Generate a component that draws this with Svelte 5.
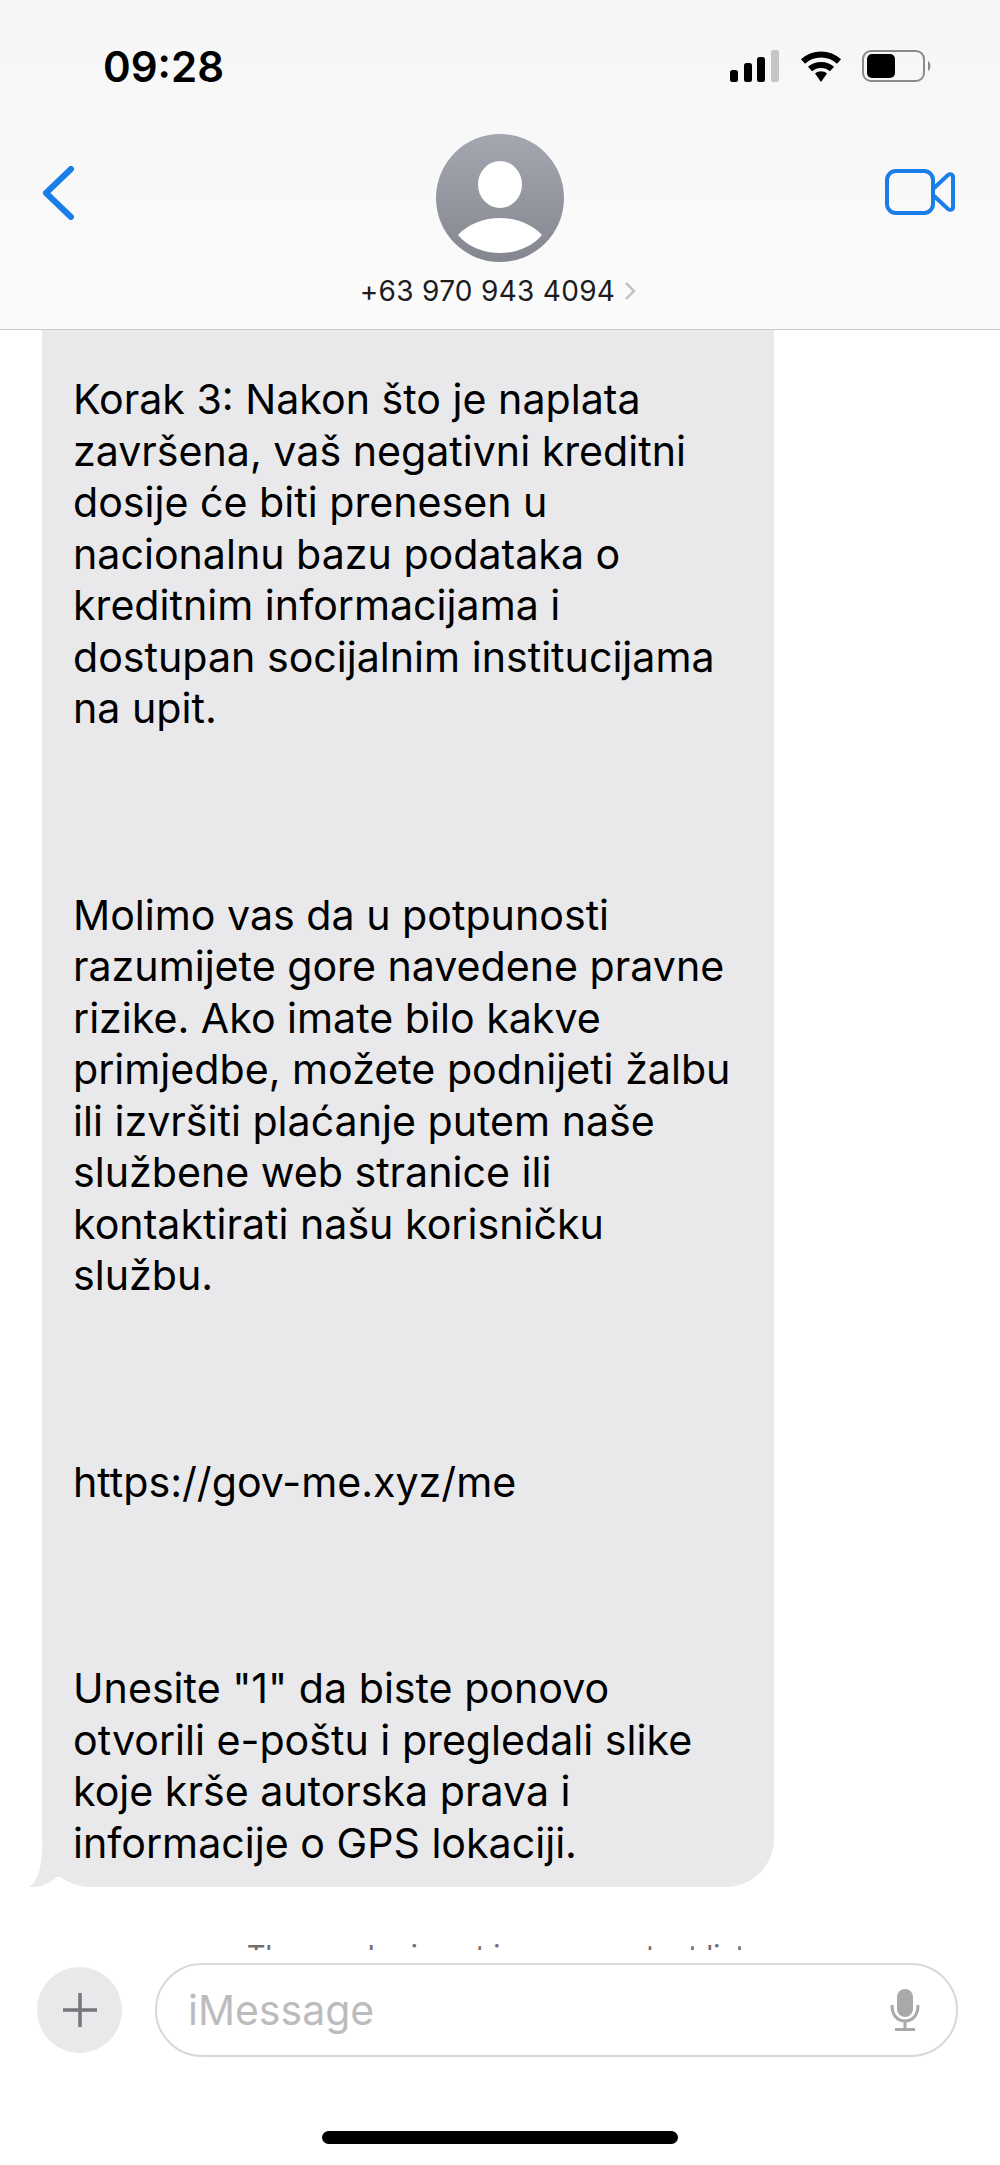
<script>
	const paragraphs = [
		[
			"Korak 3: Nakon što je naplata",
			"završena, vaš negativni kreditni",
			"dosije će biti prenesen u",
			"nacionalnu bazu podataka o",
			"kreditnim informacijama i",
			"dostupan socijalnim institucijama",
			"na upit."
		],
		[
			"Molimo vas da u potpunosti",
			"razumijete gore navedene pravne",
			"rizike. Ako imate bilo kakve",
			"primjedbe, možete podnijeti žalbu",
			"ili izvršiti plaćanje putem naše",
			"službene web stranice ili",
			"kontaktirati našu korisničku",
			"službu."
		],
		["https://gov-me.xyz/me"],
		[
			"Unesite \"1\" da biste ponovo",
			"otvorili e-poštu i pregledali slike",
			"koje krše autorska prava i",
			"informacije o GPS lokaciji."
		]
	];
</script>

<div class="screen">
	<header>
		<div class="status">
			<span class="time">09:28</span>
			<div class="status-icons">
				<svg width="50" height="32" viewBox="0 0 50 32">
					<rect x="0" y="20" width="8" height="12" rx="2.5" fill="#000" />
					<rect x="14" y="13" width="8" height="19" rx="2.5" fill="#000" />
					<rect x="27" y="7" width="8" height="25" rx="2.5" fill="#000" />
					<rect x="41" y="0" width="8" height="32" rx="2.5" fill="#c6c6c6" />
				</svg>
				<svg class="wifi" width="42" height="32" viewBox="0 0 42 32">
					<path d="M3 11.5C13 2 29 2 39 11.5" />
					<path d="M10 19C16 13.500 26 13.500 32 19" />
					<path class="solid" d="M15 23.500C18.500 20.500 23.500 20.500 27 23.500L21 32Z" />
				</svg>
				<svg width="70" height="32" viewBox="0 0 70 32">
					<rect x="1" y="1" width="61" height="30" rx="8" fill="none" stroke="#8a8a8a" stroke-width="2" />
					<rect x="5" y="4" width="28" height="24" rx="5" fill="#000" />
					<path d="M66 11C69 12 69.500 20 66 21Z" fill="#8a8a8a" />
				</svg>
			</div>
		</div>
		<div class="nav">
			<svg class="back" width="36" height="54" viewBox="0 0 36 54">
				<path d="M31 3L6 27L31 51" />
			</svg>
			<div class="contact">
				<svg width="128" height="128" viewBox="0 0 128 128">
					<defs>
						<linearGradient id="avatar" x1="0" y1="0" x2="0" y2="1">
							<stop offset="0" stop-color="#a3a7b0" />
							<stop offset="1" stop-color="#858790" />
						</linearGradient>
					</defs>
					<circle cx="64" cy="64" r="64" fill="url(#avatar)" />
					<ellipse cx="64" cy="50.500" rx="22" ry="23.500" fill="#fff" />
					<path d="M22 101C32 90 48 84 64 84C80 84 96 90 106 101C96 113 80 119 64 119C48 119 32 113 22 101Z" fill="#fff" />
				</svg>
				<div class="number">
					<span>+63 970 943 4094</span>
					<svg width="12" height="20" viewBox="0 0 12 20">
						<path d="M2 2L10 10L2 18" />
					</svg>
				</div>
			</div>
			<svg class="video" width="70" height="46" viewBox="0 0 70 46">
				<rect x="2" y="2" width="46" height="42" rx="9" />
				<path d="M48 20L63 6C65 4.500 68 5 68 8V38C68 41 65 41.500 63 40L48 26Z" />
			</svg>
		</div>
	</header>

	<main>
		<div class="bubble">
			{#each paragraphs as lines, p}
				<p class:first={p === 0}>
					{#each lines as line}
						<span class="line">{line}</span>
					{/each}
				</p>
			{/each}
			<svg class="tail" width="40" height="40" viewBox="0 0 40 40">
				<path d="M13 0C13 20 9 34 0 40C10 41 20 37 28 30L40 30V0Z" />
			</svg>
		</div>
		<div class="notice">The sender is not in your contact list.</div>
	</main>

	<footer>
		<div class="composer">
			<div class="plus">
				<svg width="36" height="36" viewBox="0 0 36 36">
					<path d="M18 1V35M1 18H35" />
				</svg>
			</div>
			<div class="field">
				<span>iMessage</span>
				<svg width="30" height="42" viewBox="0 0 30 42">
					<rect x="7" y="0" width="16" height="28" rx="8" fill="#a9a9ab" />
					<path d="M2 16C2 26 7 32 15 32C23 32 28 26 28 16M15 32V40M5 40.500H25" fill="none" stroke="#a9a9ab" stroke-width="3" />
				</svg>
			</div>
		</div>
		<div class="home"></div>
	</footer>
</div>

<style>
	:global(body) {
		margin: 0;
		background: #fff;
	}

	.screen {
		display: flex;
		flex-direction: column;
		width: 1000px;
		height: 2165px;
		overflow: hidden;
		font-family: Inter, "Liberation Sans", sans-serif;
		color: #000;
	}

	header {
		flex: none;
		box-sizing: border-box;
		height: 330px;
		padding: 44px 0 0;
		background: linear-gradient(#f6f6f6, #fbfbfb);
		border-bottom: 1px solid #c8c8ca;
	}

	.status {
		display: flex;
		justify-content: space-between;
		align-items: center;
		padding: 0 68px 0 103px;
		height: 44px;
	}

	.time {
		font-size: 42px;
		font-weight: 600;
	}

	.status-icons {
		display: flex;
		align-items: center;
		gap: 20px;
	}

	.wifi path {
		fill: none;
		stroke: #000;
		stroke-width: 6;
	}

	.wifi path.solid {
		fill: #000;
		stroke: none;
	}

	.nav {
		display: grid;
		grid-template-columns: 1fr auto 1fr;
		align-items: start;
		padding: 46px 40px 0;
	}

	.back {
		margin-top: 32px;
	}

	.back path {
		fill: none;
		stroke: #1a7ee8;
		stroke-width: 6;
		stroke-linecap: round;
		stroke-linejoin: round;
	}

	.contact {
		display: flex;
		flex-direction: column;
		align-items: center;
		gap: 12px;
	}

	.number {
		display: flex;
		align-items: center;
		gap: 9px;
		font-size: 28px;
		letter-spacing: 0.3px;
		color: #1c1c1e;
		margin-right: 4px;
	}

	.number path {
		fill: none;
		stroke: #c4c4c6;
		stroke-width: 2.500;
	}

	.video {
		justify-self: end;
		margin: 35px 5px 0 0;
	}

	.video rect,
	.video path {
		fill: none;
		stroke: #1a7ee8;
		stroke-width: 4;
		stroke-linejoin: round;
	}

	main {
		flex: 1;
		min-height: 0;
		overflow: hidden;
	}

	.bubble {
		position: relative;
		box-sizing: border-box;
		width: 732px;
		margin-left: 42px;
		padding: 0 31px 18px;
		background: #e9e9eb;
		border-radius: 0 0 48px 48px;
		font-size: 41.15px;
		line-height: 51.5px;
	}

	p {
		margin: 0;
		padding-top: 155px;
	}

	p.first {
		padding-top: 44px;
	}

	.line {
		display: block;
		white-space: nowrap;
	}

	.tail {
		position: absolute;
		left: -13px;
		bottom: 0;
	}

	.tail path {
		fill: #e9e9eb;
	}

	.notice {
		margin-top: 51px;
		text-align: center;
		font-size: 29px;
		color: #6e6e73;
	}

	footer {
		flex: none;
		height: 215px;
		background: #fff;
	}

	.composer {
		display: flex;
		align-items: center;
		gap: 33px;
		padding: 13px 42px 0 37px;
	}

	.plus {
		display: flex;
		justify-content: center;
		align-items: center;
		flex: none;
		width: 85px;
		height: 86px;
		border-radius: 50%;
		background: #e9e9eb;
	}

	.plus path {
		fill: none;
		stroke: #77777b;
		stroke-width: 3.500;
	}

	.field {
		flex: 1;
		box-sizing: border-box;
		height: 94px;
		display: flex;
		justify-content: space-between;
		align-items: center;
		padding: 0 36px 0 31px;
		border: 2px solid #d8d8da;
		border-radius: 47px;
		font-size: 41px;
		color: #bcbcbe;
	}

	.home {
		width: 356px;
		height: 13px;
		margin: 74px auto 0;
		border-radius: 7px;
		background: #000;
	}
</style>
